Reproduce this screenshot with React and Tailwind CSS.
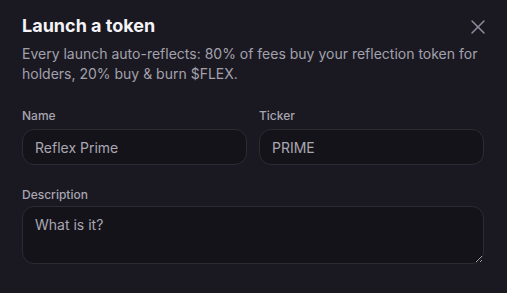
import React from "react";

export default function App() {
  return (
    <div className="w-[507px] h-[293px] bg-[#1a1921] overflow-hidden" style={{ fontFamily: "Inter, 'Noto Sans', sans-serif" }}>
      <div className="pl-[22px] pr-[23px] pt-3">
        <div className="flex items-start justify-between">
          <h2 className="text-lg leading-7 font-bold text-[#f4f3f7]">Launch a token</h2>
          <button className="mt-[3px] -mr-[6px] text-[#8f8d99]">
            <svg width="24" height="24" viewBox="0 0 24 24" fill="none" stroke="currentColor" strokeWidth="1.5" strokeLinecap="round" strokeLinejoin="round">
              <path d="M18 6 6 18" />
              <path d="m6 6 12 12" />
            </svg>
          </button>
        </div>
        <p className="mt-1 text-sm leading-5 text-[#a3a1ad]">
          Every launch auto-reflects: 80% of fees buy your reflection token for holders, 20% buy &amp; burn $FLEX.
        </p>
        <div className="mt-6 grid grid-cols-2 gap-3">
          <div className="flex flex-col gap-[5px]">
            <label className="text-xs leading-4 font-medium text-[#a7a5b0]">Name</label>
            <input
              defaultValue="Reflex Prime"
              className="h-9 rounded-xl border border-[#2c2b33] bg-[#141319] px-3 text-sm text-[#a9a7b2] outline-none"
            />
          </div>
          <div className="flex flex-col gap-[5px]">
            <label className="text-xs leading-4 font-medium text-[#a7a5b0]">Ticker</label>
            <input
              defaultValue="PRIME"
              className="h-9 rounded-xl border border-[#2c2b33] bg-[#141319] px-3 text-sm text-[#a9a7b2] outline-none"
            />
          </div>
        </div>
        <div className="mt-[22px] flex flex-col gap-[3px]">
          <label className="text-xs leading-4 font-medium text-[#a7a5b0]">Description</label>
          <textarea
            rows={2}
            placeholder="What is it?"
            className="rounded-xl border border-[#2c2b33] bg-[#141319] px-3 py-2 text-sm leading-5 text-[#a9a7b2] placeholder:text-[#a9a7b2] outline-none"
          />
        </div>
      </div>
    </div>
  );
}
